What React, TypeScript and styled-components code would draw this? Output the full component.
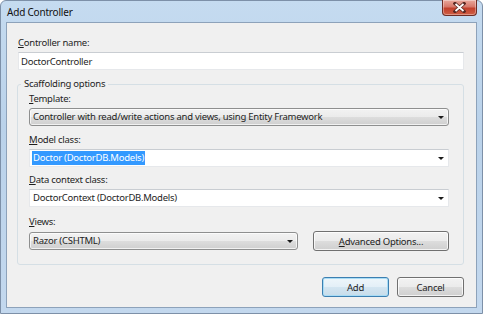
import React from "react";
import styled, { createGlobalStyle } from "styled-components";

const GlobalStyle = createGlobalStyle`
  html, body {
    margin: 0;
    padding: 0;
    background: #ffffff;
  }
  body {
    font-family: "Noto Sans", "Open Sans", sans-serif;
    font-size: 9.5px;
    letter-spacing: -0.25px;
    color: #1e1e1e;
  }
`;

const Window = styled.div`
  width: 483px;
  height: 314px;
  box-sizing: border-box;
  display: flex;
  flex-direction: column;
  padding: 0 5px 5px 5px;
  border: 1px solid #7d90a8;
  border-radius: 6px 6px 0 0;
  background: linear-gradient(180deg, #c5dbf0 0%, #bad2ea 40%, #c3d8ee 100%);
`;

const TitleBar = styled.div`
  height: 21px;
  display: flex;
  align-items: flex-start;
  justify-content: space-between;
`;

const Title = styled.span`
  padding: 5px 0 0 1px;
  font-size: 10px;
  letter-spacing: -0.2px;
  line-height: 12px;
  color: #111;
`;

const CloseButton = styled.button`
  width: 35px;
  height: 16px;
  margin: -1px 0 0 0;
  padding: 0;
  display: flex;
  align-items: center;
  justify-content: center;
  border: 1px solid #6e2d25;
  border-top: none;
  border-radius: 0 0 4px 4px;
  background: linear-gradient(180deg, #e9a99c 0%, #d7786a 45%, #c2402c 55%, #cf5f45 100%);
  box-shadow: inset 0 0 0 1px rgba(255, 255, 255, 0.35);
`;

const Client = styled.div`
  flex: 1;
  display: flex;
  flex-direction: column;
  border: 1px solid #8da2ba;
  background: #f0f0f0;
  padding: 13px 12px 0 11px;
`;

const Label = styled.div`
  height: 14px;
  line-height: 14px;
  margin-bottom: 2px;
  white-space: nowrap;
`;

const Key = styled.span`
  text-decoration: underline;
  text-underline-offset: 1px;
`;

const TextBox = styled.div`
  height: 18px;
  box-sizing: border-box;
  display: flex;
  align-items: center;
  padding-left: 2px;
  background: #ffffff;
  border: 1px solid #e6e8eb;
  border-top-color: #c9cdd2;
`;

const Group = styled.fieldset`
  margin: 7px 0 0 -1px;
  padding: 1px 14px 13px 11px;
  border: 1px solid #d5dfe5;
  border-radius: 3px;
  min-width: 0;
`;

const Legend = styled.legend`
  margin-left: -8px;
  padding: 0 3px;
  height: 14px;
  line-height: 14px;
`;

const Field = styled.div<{ $top: number }>`
  margin-top: ${({ $top }) => $top}px;
  display: flex;
  flex-direction: column;
`;

const Combo = styled.div<{ $editable?: boolean; $width?: number }>`
  height: 18px;
  box-sizing: border-box;
  display: flex;
  align-items: center;
  justify-content: space-between;
  padding: 0 4px 0 2px;
  width: ${({ $width }) => ($width ? `${$width}px` : "auto")};
  border-radius: ${({ $editable }) => ($editable ? "0" : "3px")};
  border: 1px solid ${({ $editable }) => ($editable ? "#e6e8eb" : "#8e8f8f")};
  border-top-color: ${({ $editable }) => ($editable ? "#c9cdd2" : "#8e8f8f")};
  background: ${({ $editable }) =>
    $editable
      ? "#ffffff"
      : "linear-gradient(180deg, #f2f2f2 0%, #ebebeb 50%, #dddddd 51%, #cfcfcf 100%)"};
  box-shadow: ${({ $editable }) =>
    $editable ? "none" : "inset 0 0 0 1px rgba(255,255,255,0.7)"};
`;

const ComboText = styled.span<{ $selected?: boolean }>`
  line-height: 14px;
  padding: 0 1px;
  white-space: nowrap;
  background: ${({ $selected }) => ($selected ? "#3399ff" : "transparent")};
  color: ${({ $selected }) => ($selected ? "#ffffff" : "inherit")};
`;

const Arrow = styled.span`
  width: 0;
  height: 0;
  border-left: 3px solid transparent;
  border-right: 3px solid transparent;
  border-top: 3px solid #1a1a1a;
`;

const ViewsRow = styled.div`
  display: flex;
  align-items: center;
  justify-content: space-between;
  height: 20px;
`;

const Button = styled.button<{ $default?: boolean; $width: number }>`
  width: ${({ $width }) => $width}px;
  height: 20px;
  padding: 0;
  font-family: inherit;
  font-size: 9.5px;
  letter-spacing: -0.25px;
  color: #1e1e1e;
  border-radius: 3px;
  border: 1px solid ${({ $default }) => ($default ? "#3c7fb1" : "#707070")};
  background: ${({ $default }) =>
    $default
      ? "linear-gradient(180deg, #eef6fb 0%, #e3eff7 50%, #d3e5f1 51%, #c7dcea 100%)"
      : "linear-gradient(180deg, #f2f2f2 0%, #ebebeb 50%, #dddddd 51%, #cfcfcf 100%)"};
  box-shadow: ${({ $default }) =>
    $default
      ? "inset 0 0 0 1px #a8dcf5"
      : "inset 0 0 0 1px rgba(255,255,255,0.75)"};
`;

const ButtonRow = styled.div`
  display: flex;
  justify-content: flex-end;
  gap: 8px;
  margin-top: 12px;
`;

export default function App() {
  return (
    <>
      <GlobalStyle />
      <Window>
        <TitleBar>
          <Title>Add Controller</Title>
          <CloseButton aria-label="Close">
            <svg width="13" height="11" viewBox="0 0 13 11">
              <path
                d="M2 1.5 L11 9.5 M11 1.5 L2 9.5"
                stroke="#5a2a24"
                strokeWidth="3.4"
                strokeLinecap="square"
              />
              <path
                d="M2.5 2 L10.5 9 M10.5 2 L2.5 9"
                stroke="#ffffff"
                strokeWidth="1.8"
              />
            </svg>
          </CloseButton>
        </TitleBar>
        <Client>
          <Label>
            <Key>C</Key>ontroller name:
          </Label>
          <TextBox>DoctorController</TextBox>

          <Group>
            <Legend>Scaffolding options</Legend>

            <Field $top={0}>
              <Label>
                <Key>T</Key>emplate:
              </Label>
              <Combo>
                <ComboText>
                  Controller with read/write actions and views, using Entity Framework
                </ComboText>
                <Arrow />
              </Combo>
            </Field>

            <Field $top={7}>
              <Label>
                <Key>M</Key>odel class:
              </Label>
              <Combo $editable>
                <ComboText $selected>Doctor (DoctorDB.Models)</ComboText>
                <Arrow />
              </Combo>
            </Field>

            <Field $top={6}>
              <Label>
                <Key>D</Key>ata context class:
              </Label>
              <Combo $editable>
                <ComboText>DoctorContext (DoctorDB.Models)</ComboText>
                <Arrow />
              </Combo>
            </Field>

            <Field $top={8}>
              <Label>
                <Key>V</Key>iews:
              </Label>
              <ViewsRow>
                <Combo $width={269}>
                  <ComboText>Razor (CSHTML)</ComboText>
                  <Arrow />
                </Combo>
                <Button $width={136}>
                  <Key>A</Key>dvanced Options...
                </Button>
              </ViewsRow>
            </Field>
          </Group>

          <ButtonRow>
            <Button $default $width={67}>
              Add
            </Button>
            <Button $width={67}>Cancel</Button>
          </ButtonRow>
        </Client>
      </Window>
    </>
  );
}
